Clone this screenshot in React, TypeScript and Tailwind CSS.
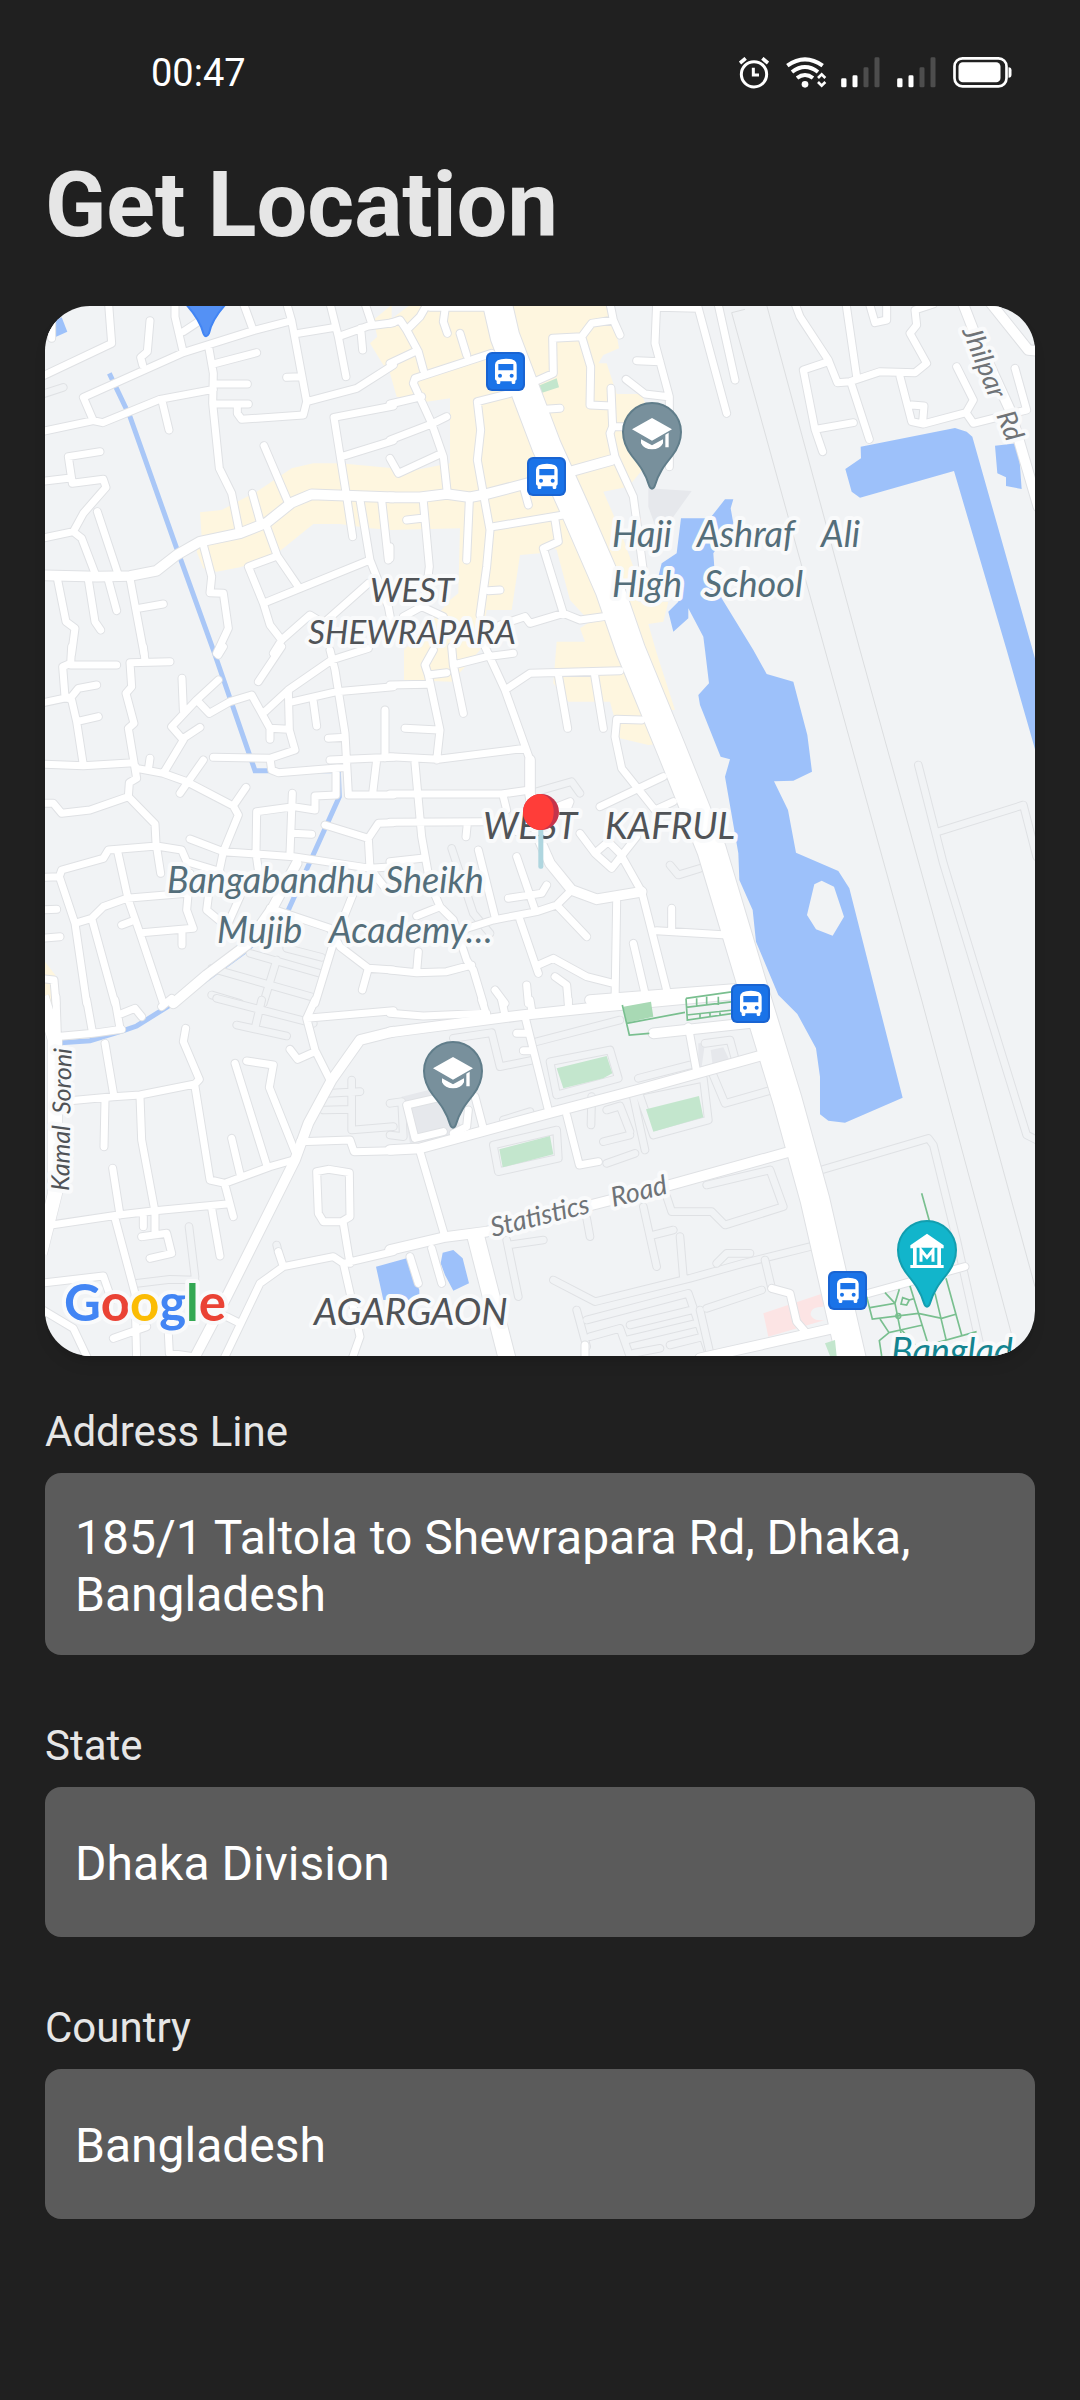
import React from "react";

/* Map geometry is stored in sheets drawn at three times the map's scale. */
type Sheet = { x: number; y: number; roads: string; wide?: string; faint?: string };

const sheets: Sheet[] = [
  {
    x: -5,
    y: -6,
    wide: "M0 826L170 830L270 828L350 812L410 765L480 725L600 700L680 668L755 608L815 583L1060 592",
    roads:
      "M0 232L215 130L205 0M35 115V60M0 396L160 362L188 368L360 298L520 268M160 362L130 292L430 158L640 92L755 62L740 10M430 158L405 50V10M430 95L480 62M330 62L322 155L302 172L308 195M640 92L612 15M755 62L800 305L950 265L1060 195M800 305L790 345L605 358L592 340V312M775 100L885 82M870 10L895 110L918 230M895 110L985 78L1060 68M962 85L968 150M975 10L995 70M740 232L785 230M505 135L520 220L518 310L538 505L575 580L598 695M520 192L650 158M520 252H622M520 312H625M365 298L387 390M1060 318L882 352L920 590M905 470L1060 422M672 437L745 608M637 580L662 670M680 680L712 768L775 860M712 768L625 800L670 910L990 780M670 910L690 975L725 1020L810 945L850 970L985 850M725 1020L700 1060M490 735L515 830L510 878L550 880L565 985L530 1060M180 455L85 470L97 550L190 538L198 562L130 640L100 695L0 716M0 545L85 535M100 695L125 715L165 820M172 635L235 825M52 835L78 965L105 985L95 1060M145 840L165 965L182 990M205 840L230 932M270 835L312 1060M295 925L370 912M920 590L938 710M960 600L990 780L1045 920L1060 1000M1025 600L1045 780",
    faint: "M0 285L70 262",
  },
  {
    x: 345,
    y: -6,
    wide: "M0 592L90 592L170 582L240 592L290 582L420 548L540 515L665 480",
    roads:
      "M0 70L30 60L50 90L85 155L100 210M50 90L90 50L110 15M120 22H300M165 30L160 65L172 100M0 190L75 155M210 100L230 165M305 160L75 235L70 250L125 370L160 470L172 580M0 312L95 290M0 420L125 372L170 350M0 475L25 520L155 460M360 280L262 305L272 390L262 480L280 580L300 690L290 800L270 945M435 245L490 220L488 115L575 110L605 70L670 60L690 105M670 60L660 10M575 110L602 200L600 315L665 318M663 265L668 380L660 400L675 470L730 590L745 700L765 850M668 380H700M465 328L510 325M400 560L415 615M310 680L520 645M495 660L505 725L460 745L520 940L570 960L640 950M520 940L420 970L405 950L330 975M100 605L118 800L105 900M50 660L95 655M238 600L230 780M295 872L330 870M0 775V740M40 950L95 920L160 950M800 10L795 130L838 290V500M740 182L810 185M708 238L765 282L835 290M808 22L925 25M925 25L1010 340M985 15L1035 240",
  },
  {
    x: 655,
    y: -6,
    wide: "M785 0L820 90L930 330L1015 620M865 0L985 150L1030 155",
    roads:
      "M285 10L300 50L385 180L412 248L450 245L540 215L645 218L680 190L630 100L650 75L645 30L700 12M385 185L310 210L345 388L368 455M345 388L460 368M438 10L470 230M455 255L508 418M508 10L525 68L560 60V10M600 230L635 365L670 372L798 338L820 300L770 200M798 338L820 370L980 330L945 205M635 315L672 318L668 365",
  },
  {
    x: -5,
    y: 344,
    wide: "M400 1060L500 975L620 885L700 770L770 640",
    roads:
      "M0 160L95 140L115 115L170 105M95 -10L92 40L68 50L75 140L95 150L110 215L130 345M92 45H230M110 215L175 200M0 342L130 347L280 338L290 355L370 370L440 395L580 468L595 495L550 605L530 700M310 -10L315 32M390 35L270 38L275 110L258 130L282 220L265 235L290 385L268 398L265 440L345 522L348 580L362 670M330 325L325 360M370 370L430 270L395 230L470 150L535 90M430 265L480 232M426 85L430 180M470 150L508 190L570 155L635 135L690 235L745 238M690 235V268M535 15L550 -10M655 95L725 -10M675 185L745 120L875 30L985 -5M870 0L885 60L915 250L925 430M745 120L748 240L765 300L690 325L520 322M690 325L695 360L715 368L920 352M760 155L890 125L1060 110M820 155L830 228M865 265L915 262M870 330L1060 322M1010 330L998 430M1035 180V325M925 435H1060M888 365V435L825 438V480L760 470L650 485L648 610L655 660M757 430L750 610M760 550L815 553M265 440L150 480L65 490L40 460H0M490 330L420 430M618 412L585 460M450 567L550 605L650 612L760 620L990 655L1060 650M855 525L985 565L1015 520L1060 518M985 565L990 655L1040 720M0 682L58 680L65 660L190 625L205 600L350 588L425 600L440 635L540 665M58 680L105 820L140 1060M232 600L265 750L300 850L370 1060M105 820L155 805L190 770L260 745L440 730M155 805L225 1060M245 825L285 810M305 848L460 835L440 780L450 670M426 850V885M0 780L50 778M0 865L60 860M510 700L500 780L560 830L600 740M690 775L870 835L900 890L985 955L1060 960M985 955L967 1020M940 730L880 880L825 1060M0 985L42 990L48 1060",
    faint:
      "M630 910L840 970M515 955L830 1045M710 930L670 1060M740 895L845 922M515 1035L600 1060",
  },
  {
    x: 345,
    y: 344,
    wide: "M420 330V430L440 550L480 640L545 720L620 748L755 725M600 1050L1060 1015",
    roads:
      "M0 105L110 103M185 -10L190 45L220 190M190 45L290 20L370 10M130 0L105 45L115 75L150 240L140 330M115 75L170 68M45 235L145 240M0 320L145 328L405 295M285 -10L345 120L420 330M345 120L420 70L690 62M505 75L533 235M613 70L640 235M0 432L335 432L420 420M340 440L350 480M75 340L95 560L120 700L150 770L190 810L230 930L250 960L280 1060M0 517L290 515M232 520L228 560M0 635L95 625M80 798L150 770M265 600L315 800M215 840L310 810L440 785L500 765L545 720M380 620L435 780M355 745L455 730L470 705M390 810L445 970M500 765L590 860M445 945L490 925L590 980L670 1000M680 755L675 1060M495 980L530 1005L535 1060M315 1020L345 1060M410 1005L415 1060M570 550L615 610L665 655L740 560M620 605L655 575L690 610L755 725L835 1040M755 210L680 208L675 260L695 355L795 480L850 455M630 470L820 380M730 880L765 1030M845 775V845M800 842L1010 855M0 960L80 968L170 965L245 945M85 905L80 965M380 545L490 475L540 455L530 480",
    faint: "M440 425L545 395L570 430M840 645L865 675L930 655M185 595L250 790L300 850",
  },
  {
    x: 655,
    y: 344,
    roads: "",
    faint: "M655 345L730 640L855 1050L980 1455L1010 1470M715 545L970 465L1010 620",
  },
  {
    x: -5,
    y: 694,
    wide: "M1060 95L960 120L875 240L805 370L765 480L560 890L460 1080",
    roads:
      "M48 -10L52 105M45 110L160 100L245 88M140 0L158 100M225 0L240 85M235 45L285 25L305 50M365 20L395 -5M90 302L220 290L300 285L465 252L478 238L430 125L437 85M195 130L222 290M195 300L192 440M300 290L305 420L345 635V700M465 260L510 540L555 550L690 500L760 480M575 415L602 530M585 190L680 495M620 183L700 195L688 262L765 455M825 0L800 55L825 150L870 240M800 55L1060 32M750 148L773 178L825 155M780 425L930 420L942 455L1060 452M830 515L865 508L928 518L930 650L905 665L850 665L835 640ZM910 670L930 790M0 680L235 645L345 632L560 612M218 505L240 645M225 655L285 880L290 1080M555 555L580 650M515 625L540 768M310 650V680M305 710L380 700L395 760L330 775M715 755L730 800M550 1080L660 850L730 800L880 770L910 790L1060 755M910 790L960 1010L935 1080M0 850L190 828L215 900M0 925L100 985L145 1080M220 1015L320 980M385 1000L388 1060L460 1070M560 950L600 970",
    faint:
      "M447 680L465 830M290 850L390 838L465 840M710 735L715 755M530 -5L820 70M665 0L645 85M590 75L740 108M860 280L960 275M850 330L935 328M935 240V390L1060 380",
  },
  {
    x: 345,
    y: 694,
    wide:
      "M0 97L400 45L640 20L1060 -20M0 450L90 445L475 340L760 265L1125 163M790 100L1090 68M0 750L160 712L290 695L840 555L1200 455",
    roads:
      "M0 40L100 48L290 40M275 0L290 45M335 0L345 45M420 0L425 30M535 0V20M405 50L475 330M380 100H410M400 152H430M90 455L165 710M255 290L280 385M160 395L75 415L50 315L160 290M235 330L230 380L190 400M530 345L568 495L625 485M895 80L920 215M60 770L85 850M125 745L155 850M585 1035V1080",
    faint:
      "M480 185L660 150L685 235L500 285ZM310 435L500 390L505 475L325 515ZM745 275L940 235L955 360L790 405ZM190 115L305 98L330 200L430 180M440 125L690 60M340 360L420 335M870 710L880 830M590 655L600 710M760 620L800 800M790 705L850 690M490 840L615 905L900 835L1060 790L1260 740M355 735L460 720M350 720L385 890M560 930L590 1040M590 960L895 880L960 1070M600 1010L690 985L720 1070M720 975L905 930M710 1020L920 970M730 1060L810 1045M840 1035L940 1010M830 590L845 635L965 635L1005 675L1180 620L1140 510L950 555M745 235L900 195M605 290L603 375M640 425L720 405M650 490L735 460M650 330L690 318L720 395M730 290L765 450M0 310L35 305L40 410L0 405M965 215L1005 310L1145 270M945 130L1020 120L1035 175",
  },
  {
    x: 655,
    y: 694,
    wide: "M0 1075L400 985",
    roads: "M505 880L795 800M215 865L270 880L290 965L320 1000",
    faint:
      "M370 508L685 415L700 435L770 720L850 1080M20 925L185 870M195 780L215 865M0 930L30 1060M50 790L80 760H150",
  },
];

const lake =
  "M873 655L960 655L1005 598H1030L1022 625L1030 670L970 760L975 830L995 895L1090 1050L1130 1122L1210 1145L1252 1305L1266 1415L1210 1442L1152 1444L1194 1530L1218 1658L1345 1713L1378 1765L1463 2100L1538 2393L1365 2468L1315 2462L1290 2443V2330L1278 2245L1222 2142L1165 2085L1098 1925L1088 1830L1048 1740L1045 1660L1005 1430L1020 1378L992 1370L930 1215L925 1185L957 1150L945 1050L940 1010L895 925V955L850 995L835 935L865 905L870 850L805 830L815 790L860 760Z" +
  "M1273 1753L1295 1742L1332 1760L1362 1850L1328 1907L1278 1888L1251 1845Z";

const avenue =
  "M315 -20L345 110L470 440L560 640L660 870L722 1050L845 1350L965 1650L1085 2050L1192 2400L1275 2700L1385 3180";

function at(x: number, y: number) {
  return `translate(${x} ${y}) scale(0.33333)`;
}

function BusStop({ x, y }: { x: number; y: number }) {
  return (
    <g transform={at(x, y)}>
      <rect width="117" height="117" rx="18" fill="#1964d2" />
      <rect x="6" y="6" width="105" height="105" rx="14" fill="#1a73e8" />
      <path
        fill="#fff"
        fillRule="evenodd"
        d="M27 38Q27 20 60 20Q92 20 92 38V80Q92 84 88 86V92Q88 96 83 96H81Q77 96 77 92V88H43V92Q43 96 39 96H36Q32 96 32 92V86Q27 84 27 80ZM37 36V55H82V36Z"
      />
      <circle cx="42" cy="71" r="6" fill="#1a73e8" />
      <circle cx="77" cy="71" r="6" fill="#1a73e8" />
    </g>
  );
}

function PinShape({ fill, edge }: { fill: string; edge: string }) {
  return (
    <path
      d="M0 -87A87 87 0 0 1 87 0C87 30 76 51 60 72C36 102 20 122 9 160Q6 170 0 170Q-6 170 -9 160C-20 122 -36 102 -60 72C-76 51 -87 30 -87 0A87 87 0 0 1 0 -87Z"
      fill={fill}
      stroke={edge}
      strokeWidth="6"
    />
  );
}

function SchoolPin({ x, y }: { x: number; y: number }) {
  return (
    <g transform={at(x, y)}>
      <PinShape fill="#78909c" edge="#607d8a" />
      <path
        fill="#fff"
        d="M0 -42L60 -8L0 26L-60 -8ZM-33 22L0 40L33 22V34Q24 52 0 52Q-24 52 -33 34ZM40 8L50 2V46H40Z"
      />
    </g>
  );
}

function MuseumPin({ x, y }: { x: number; y: number }) {
  return (
    <g transform={at(x, y)}>
      <PinShape fill="#12b5cb" edge="#129eaf" />
      <path
        fill="#fff"
        fillRule="evenodd"
        d="M0 -49L50 -14V-5H42V45H50V54H-50V45H-42V-5H-50V-14ZM-31 -7V45H31V-7Z"
      />
      <path d="M-18 35V0L0 22L18 0V35" fill="none" stroke="#fff" strokeWidth="9" />
    </g>
  );
}

function CityMap() {
  return (
    <svg
      viewBox="0 0 990 1050"
      role="img"
      aria-label="Map around West Kafrul, Dhaka"
      className="block w-full h-auto bg-[#f1f3f5] font-['Lato',sans-serif]"
    >
      <g transform={at(-5, -6)} fill="#fef6df">
        <path d="M480 637L545 630L650 575L755 505L820 490H900L1060 505V690L990 685L900 672H820L730 745L690 775L600 802L530 815L490 805L470 755L485 710Z" />
        <path d="M1000 60L1055 15V220L1030 195L990 130L1012 110Z" />
        <path d="M15 1985L50 2030V2160H15Z" />
      </g>
      <g transform={at(345, -6)}>
        <path
          fill="#fef6df"
          d="M0 60L60 15H665L687 145L640 165L625 190H650L680 282H755L765 310V500L740 530L715 560L640 575L690 690L730 800L745 905H835L820 965L775 972L800 1060L855 1230H825L830 1330L775 1335L690 1315L660 1205H535L490 1150L500 1025H585L570 985L600 965L540 900L500 750L480 735L450 760L390 765L365 930H290L270 1050L185 1145L42 1140V1050L130 960L180 900L205 880L210 685L0 690V525L180 490V295L110 305L20 290L0 220Z"
        />
        <path fill="#c3e6cd" d="M435 262L500 235L507 262L445 282Z" />
        <path fill="#e6e8ec" d="M775 565L905 573L850 650L800 690L775 620Z" />
        <path fill="#9dc1fa" fillRule="evenodd" d={lake} />
      </g>
      <g transform={at(655, -6)}>
        <path
          fill="#9dc1fa"
          d="M482 440L765 384L800 395L817 410L998 1050L1020 1130V1400L920 1050L762 513L480 593L455 575L436 507L483 475ZM885 437L950 430L958 470L965 567L918 558V532L892 520Z"
        />
        <path
          fill="none"
          stroke="#dcdee0"
          strokeWidth="3"
          d="M200 15L480 1050L770 2100L1005 2960M135 28L95 38L375 1050L665 2100L950 3160"
        />
      </g>
      <g transform={at(-5, -6)} fill="none" stroke="#a9c7f7" strokeWidth="15">
        <path d="M208 220L270 350L410 745L520 1050L645 1412H895L898 1490L745 1830L620 1950L415 2100L290 2178L250 2192L150 2222L62 2228" />
        <path fill="#9dc1fa" stroke="none" d="M45 60L65 52L82 95L45 112Z" />
      </g>
      <g transform={at(345, 694)}>
        <path
          fill="#e6e8ec"
          d="M35 290L150 262L220 390L150 420L60 430ZM925 130H945L935 200H925ZM962 150L1000 142L1018 180L968 195Z"
        />
        <path fill="#9dc1fa" d="M-42 800L50 775L88 870V900H-20ZM158 758L190 750L218 775L237 850L190 872L165 825L152 790Z" />
        <path fill="#fce4e4" d="M1120 940L1300 880V920Q1260 920 1262 945Q1270 965 1305 960L1135 1010Z" />
      </g>

      {sheets.map((s, i) => (
        <g key={i} transform={at(s.x, s.y)} fill="none" stroke="#dfe1e4" strokeLinecap="round" strokeLinejoin="round">
          <path d={s.faint} strokeWidth="26" />
          <path d={s.faint} strokeWidth="20" stroke="#f1f3f5" />
        </g>
      ))}
      {sheets.map((s, i) => (
        <g key={i} transform={at(s.x, s.y)} fill="none" stroke="#dfe1e4" strokeLinecap="round" strokeLinejoin="round">
          <path d={s.roads} strokeWidth="27" />
          <path d={s.wide} strokeWidth="35" />
        </g>
      ))}
      <g fill="none" stroke="#dfe1e4">
        <path transform={at(345, -6)} d={avenue} strokeWidth="92" />
        <path transform={at(345, 694)} d="M255 700L355 1090" strokeWidth="56" />
        <path transform={at(-5, 694)} d="M5 -10L45 120V580L15 700L0 760" strokeWidth="46" />
      </g>
      {sheets.map((s, i) => (
        <g key={i} transform={at(s.x, s.y)} fill="none" stroke="#ffffff" strokeLinecap="round" strokeLinejoin="round">
          <path d={s.roads} strokeWidth="21" />
          <path d={s.wide} strokeWidth="29" />
        </g>
      ))}
      <g fill="none" stroke="#ffffff">
        <path transform={at(345, -6)} d={avenue} strokeWidth="86" />
        <path transform={at(345, 694)} d="M255 700L355 1090" strokeWidth="50" />
        <path transform={at(-5, 694)} d="M5 -10L45 120V580L15 700L0 760" strokeWidth="42" />
      </g>

      <g transform={at(345, 694)}>
        <path
          fill="#c3e6cd"
          d="M500 205L650 168L667 220L640 235L520 265ZM768 328L927 288L940 352L790 395ZM328 448L480 408L490 463L338 502ZM1305 1030L1335 1020L1340 1068H1320Z"
        />
        <path fill="#a8d9b4" d="M700 20L783 5L790 50L710 68Z" />
        <path
          fill="none"
          stroke="#79bf8f"
          strokeWidth="5"
          d="M697 15L718 105L778 100M710 70L885 37M888 -5L892 60L1030 40M888 -5L1030 -25M888 22L1030 5M890 45L1030 30M920 -5V20M950 -10V18M985 -10V15M930 40V55M960 38V52M990 32V48"
        />
        <g transform="translate(930 0)" fill="none" stroke="#79bf8f" strokeWidth="5">
          <path d="M665 580L690 670M500 890L517 957L655 940L725 955L770 942M510 923L585 910L598 868M585 910L555 878M585 910L605 1010M630 858L685 1035L830 995M705 880L738 1018M738 835L785 1005M540 957L567 998L668 975M567 998L538 1022L545 1068M605 990L650 1040M608 893L603 912L620 915L628 900ZM628 900L642 896" />
          <circle cx="595" cy="948" r="7" />
        </g>
      </g>

      <path transform={at(-5, -6)} d="M440 15H555Q515 60 507 100Q498 118 490 100Q480 60 440 15Z" fill="#5491f5" stroke="#4285f4" strokeWidth="6" />
      <BusStop x={441} y={46} />
      <BusStop x={482} y={151} />
      <BusStop x={686} y={678} />
      <BusStop x={783} y={965} />
      <SchoolPin x={607} y={126} />
      <SchoolPin x={408} y={765} />

      <g fontStyle="italic" stroke="#f9fafb" strokeWidth="8" strokeLinejoin="round" paintOrder="stroke">
        <g fill="#505357" fontSize="33">
          <text x="367" y="296" textAnchor="middle">WEST</text>
          <text x="367" y="338" textAnchor="middle">SHEWRAPARA</text>
        </g>
        <g fill="#505357" fontSize="37">
          <text x="438" y="533">
            WEST <tspan x="560">KAFRUL</tspan>
          </text>
          <text x="269" y="1019">AGARGAON</text>
        </g>
        <g fill="#546e7a" fontSize="36">
          <text x="567" y="241">
            Haji <tspan x="652">Ashraf </tspan>
            <tspan x="776">Ali</tspan>
          </text>
          <text x="567" y="291">
            High <tspan x="659">School</tspan>
          </text>
          <text x="122" y="587">
            Bangabandhu <tspan x="340">Sheikh</tspan>
          </text>
          <text x="172" y="637">
            Mujib <tspan x="284">Academy…</tspan>
          </text>
          <text x="846" y="1058" fill="#138490">Banglad</text>
        </g>
        <g fill="#6f7377" fontSize="27">
          <text transform="translate(448 931) rotate(-14)">
            Statistics <tspan x="124">Road</tspan>
          </text>
          <text transform="translate(917 25) rotate(68)">
            Jhilpar <tspan x="91">Rd</tspan>
          </text>
        </g>
        <text transform="translate(24 885) rotate(-89)" fill="#505357" fontSize="25">
          Kamal <tspan x="77">Soroni</tspan>
        </text>
      </g>

      <MuseumPin x={882} y={944} />

      <g transform={at(496, 506)}>
        <rect x="-8" y="40" width="15" height="130" rx="6" fill="#afd6df" />
        <circle r="54" fill="#c5334a" />
        <path d="M0 -54Q38 -44 38 0Q38 44 0 54A54 54 0 0 1 0 -54Z" fill="#ff3d39" />
      </g>

      <text x="19" y="1015" fontSize="51" fontWeight="700" stroke="#f9fafb" strokeWidth="8" strokeLinejoin="round" paintOrder="stroke">
        <tspan fill="#4285f4">G</tspan>
        <tspan fill="#ea4335">o</tspan>
        <tspan fill="#fbbc04">o</tspan>
        <tspan fill="#4285f4">g</tspan>
        <tspan fill="#34a853">l</tspan>
        <tspan fill="#ea4335">e</tspan>
      </text>
    </svg>
  );
}

function AlarmIcon() {
  return (
    <svg viewBox="108 50 90 96" className="h-8 w-[30px]" fill="none" stroke="#fff" aria-hidden="true">
      <circle cx="153" cy="102" r="38" strokeWidth="9" />
      <path d="M151 82V104H168" strokeWidth="9" />
      <path d="M111 68L128 54M195 68L178 54" strokeWidth="11" />
    </svg>
  );
}

function WifiIcon() {
  return (
    <svg viewBox="255 50 114 96" className="h-8 w-[38px] overflow-visible" fill="none" stroke="#fff" aria-hidden="true">
      <path d="M259 76Q312 38 365 76M273 95Q312 65 351 95M288 113Q312 95 336 113" strokeWidth="12" />
      <circle cx="312" cy="132" r="10" fill="#fff" stroke="none" />
      <path d="M351 113L362 102L373 113M351 125L362 136L373 125" strokeWidth="8" />
    </svg>
  );
}

function SignalIcon() {
  return (
    <svg viewBox="422 50 116 96" className="h-8 w-[39px]" fill="#fff" aria-hidden="true">
      <rect x="422" y="114" width="16" height="27" rx="4" />
      <rect x="456" y="105" width="15" height="36" rx="4" />
      <rect x="489" y="81" width="15" height="60" rx="4" fill="#4d4d4d" />
      <rect x="522" y="51" width="15" height="90" rx="4" fill="#4d4d4d" />
    </svg>
  );
}

function BatteryIcon() {
  return (
    <svg viewBox="758 50 176 96" className="h-8 w-[59px]" fill="#fff" aria-hidden="true">
      <rect x="762" y="54" width="156" height="84" rx="24" fill="none" stroke="#fff" strokeWidth="8" />
      <rect x="774" y="66" width="126" height="60" rx="13" />
      <path d="M924 81Q933 81 933 90V103Q933 112 924 112Z" />
    </svg>
  );
}

const fieldStyle =
  "block w-full rounded-2xl bg-[#5b5b5b] px-[30px] text-5xl leading-[57px] text-white outline-none";

function Field({ id, label, children }: { id: string; label: string; children: React.ReactNode }) {
  return (
    <div className="flex flex-col gap-4">
      <label htmlFor={id} className="text-[42px] leading-[50px] text-[#e6e6e6]">
        {label}
      </label>
      {children}
    </div>
  );
}

export default function App() {
  return (
    <div className="min-h-screen bg-[#202020] font-['Roboto',sans-serif]">
      <header className="flex h-[146px] items-center justify-between pl-[151px] pr-[68px] text-white">
        <time className="text-[38px] leading-10">00:47</time>
        <div className="flex items-center gap-[17px]">
          <AlarmIcon />
          <WifiIcon />
          <SignalIcon />
          <SignalIcon />
          <BatteryIcon />
        </div>
      </header>

      <main className="px-[45px] pt-[6px] pb-20">
        <h1 className="text-[90px] leading-[108px] font-bold text-[#e6e6e6]">Get Location</h1>

        <section className="mt-[46px] overflow-hidden rounded-[45px] shadow-lg">
          <CityMap />
        </section>

        <form className="mt-[51px] flex flex-col gap-[66px]">
          <Field id="address" label="Address Line">
            <textarea
              id="address"
              rows={2}
              defaultValue="185/1 Taltola to Shewrapara Rd, Dhaka, Bangladesh"
              className={`${fieldStyle} resize-none overflow-hidden pt-9 pb-8`}
            />
          </Field>
          <Field id="state" label="State">
            <input id="state" type="text" defaultValue="Dhaka Division" className={`${fieldStyle} h-[150px] pt-[2px]`} />
          </Field>
          <Field id="country" label="Country">
            <input id="country" type="text" defaultValue="Bangladesh" className={`${fieldStyle} h-[150px] pt-[2px]`} />
          </Field>
        </form>
      </main>
    </div>
  );
}
